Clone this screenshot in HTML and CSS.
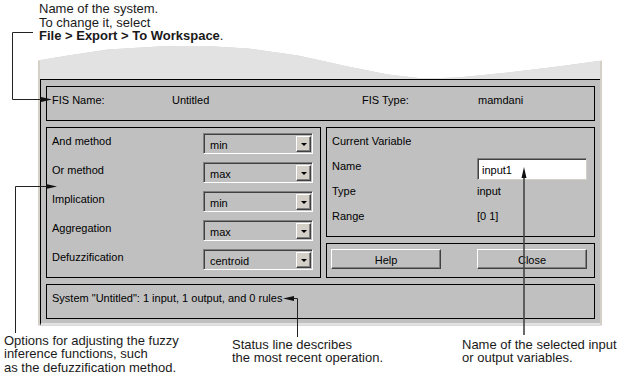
FILE: index.html
```html
<!DOCTYPE html>
<html lang="en">
  <head>
    <meta charset="UTF-8" />
    <meta name="viewport" content="width=device-width, initial-scale=1.0" />
    <title>FIS Editor</title>

    <link rel="stylesheet" href="styles.css">
  </head>
  <body>
    <div class="page">
      <p class="note note-top">
        Name of the system.<br />
        To change it, select<br />
        <b>File &gt; Export &gt; To Workspace</b>.
      </p>

      <div class="window">
        <div class="window-top"></div>
        <div class="window-body">
          <div class="panel fis-row">
            <span>FIS Name:</span>
            <span>Untitled</span>
            <span>FIS Type:</span>
            <span>mamdani</span>
          </div>

          <div class="middle">
            <div class="panel methods">
              <span class="label">And method</span>
              <div class="select"><span>min</span><i class="select-btn"></i></div>
              <span class="label">Or method</span>
              <div class="select"><span>max</span><i class="select-btn"></i></div>
              <span class="label">Implication</span>
              <div class="select"><span>min</span><i class="select-btn"></i></div>
              <span class="label">Aggregation</span>
              <div class="select"><span>max</span><i class="select-btn"></i></div>
              <span class="label">Defuzzification</span>
              <div class="select"><span>centroid</span><i class="select-btn"></i></div>
            </div>

            <div class="right-col">
              <div class="panel current-var">
                <span class="title">Current Variable</span>
                <span class="label">Name</span>
                <div class="edit">input1</div>
                <span class="label">Type</span>
                <span class="label">input</span>
                <span class="label">Range</span>
                <span class="label">[0 1]</span>
              </div>
              <div class="panel buttons">
                <button>Help</button>
                <button>Close</button>
              </div>
            </div>
          </div>

          <div class="panel status">System "Untitled": 1 input, 1 output, and 0 rules</div>
        </div>
      </div>

      <div class="notes-bottom">
        <p class="note note-options">
          Options for adjusting the fuzzy<br />
          inference functions, such<br />
          as the defuzzification method.
        </p>
        <p class="note note-status">
          Status line describes<br />
          the most recent operation.
        </p>
        <p class="note note-name">
          Name of the selected input<br />
          or output variables.
        </p>
      </div>

      <!-- callout lines -->
      <svg class="callouts" width="623" height="379" viewBox="0 0 623 379">
        <g fill="none" stroke="#222" stroke-width="1">
          <path d="M33 32.5 H12.5 V99.5 H43" />
          <path d="M15.5 333 V186.5 H48" />
          <path d="M292 298.5 H297.5 V337" />
        </g>
        <path d="M524 177 V335" fill="none" stroke="#444" stroke-width="1.6" />
        <g fill="#111">
          <polygon points="41,97 52,99.5 41,102" />
          <polygon points="46,184 57,186.5 46,189" />
          <polygon points="283,298.5 294,296 294,301" />
          <polygon points="524,167 521.5,178 526.5,178" />
        </g>
      </svg>
    </div>
  </body>
</html>
```

FILE: styles.css
```css
body {
  margin: 0;
  background: #fff;
  font-family: "Liberation Sans", Arial, sans-serif;
  color: #000;
}

.page {
  position: relative;
  width: 623px;
  height: 379px;
  overflow: hidden;
}

.note {
  margin: 0;
  font-size: 13px;
  line-height: 13.5px;
  color: #1a1a1a;
}

.note-top {
  padding: 2px 0 0 39px;
}

.window {
  margin: 3px 0 0 38px;
  width: 564px;
  padding: 0 2px;
  box-sizing: border-box;
  background: #d4d0c8;
  clip-path: polygon(0 15px, 30px 10px, 70px 4px, 120px 1px, 160px 0, 210px 3px, 260px 10px, 310px 21px, 350px 29px, 385px 33px, 420px 32px, 470px 27px, 520px 21px, 564px 15px, 564px 100%, 0 100%);
}

.window-top {
  height: 33px;
  background: #e2e2e2;
}

.window-body {
  background: #c0c0c0;
  border-top: 1px solid #000;
  border-left: 1px solid #000;
  border-bottom: 3px solid #e2e2e2;
  padding: 6px 5px 4px 5px;
  display: flex;
  flex-direction: column;
  gap: 6px;
  font-size: 11px;
  line-height: 13px;
}

.panel {
  border: 1px solid #000;
  box-sizing: border-box;
}

.fis-row {
  height: 35px;
  padding: 7px 5px 0 5px;
  display: grid;
  grid-template-columns: 120px 190px 116px auto;
}

.middle {
  display: grid;
  grid-template-columns: 275px 269px;
  gap: 5px;
  height: 151px;
}

.methods {
  padding: 5px 7px 0 5px;
  display: grid;
  grid-template-columns: 151px 110px;
  grid-auto-rows: 21px;
  row-gap: 8px;
}

.label {
  align-self: start;
  margin-top: 2px;
}

.select {
  display: flex;
  align-items: stretch;
  background: #c0c0c0;
  border-top: 1px solid #808080;
  border-left: 1px solid #808080;
  border-right: 1px solid #fff;
  border-bottom: 1px solid #fff;
  box-shadow: inset 1px 1px 0 #404040;
}

.select span {
  flex: 1;
  padding: 5px 0 0 6px;
}

.select-btn {
  width: 13px;
  margin: 2px 1px 1px 0;
  background: #d4d0c8;
  border-top: 1px solid #fff;
  border-left: 1px solid #fff;
  border-right: 1px solid #404040;
  border-bottom: 1px solid #404040;
  box-shadow: inset -1px -1px 0 #808080;
  display: flex;
  align-items: center;
  justify-content: center;
}

.select-btn::after {
  content: "";
  border-left: 3px solid transparent;
  border-right: 3px solid transparent;
  border-top: 3px solid #000;
  margin-top: 1px;
}

.right-col {
  display: flex;
  flex-direction: column;
  gap: 6px;
}

.current-var {
  height: 110px;
  padding: 7px 0 0 5px;
  display: grid;
  grid-template-columns: 145px 110px;
  grid-template-rows: 23px 25px 25px 25px;
}

.current-var .title {
  grid-column: 1 / 3;
}

.edit {
  height: 22px;
  box-sizing: border-box;
  background: #fff;
  padding: 5px 0 0 4px;
  border-top: 1px solid #808080;
  border-left: 1px solid #808080;
  border-right: 1px solid #d4d0c8;
  border-bottom: 1px solid #d4d0c8;
  box-shadow: inset 1px 1px 0 #404040;
}

.buttons {
  height: 35px;
  padding: 5px 0 0 4px;
  display: grid;
  grid-template-columns: 110px 110px;
  column-gap: 36px;
  align-items: start;
}

.buttons button {
  height: 20px;
  padding: 4px 0 0;
  font: inherit;
  color: #000;
  background: #c0c0c0;
  border-top: 1px solid #fff;
  border-left: 1px solid #fff;
  border-right: 1px solid #404040;
  border-bottom: 1px solid #404040;
  box-shadow: inset -1px -1px 0 #808080;
}

.status {
  height: 35px;
  padding: 7px 5px 0 5px;
}

.notes-bottom {
  display: flex;
  align-items: flex-start;
  margin-top: 8px;
}

.note-options {
  width: 228px;
  padding-left: 4px;
}

.note-status {
  width: 230px;
  margin-top: 4px;
}

.note-name {
  margin-top: 4px;
}

.callouts {
  position: absolute;
  left: 0;
  top: 0;
  pointer-events: none;
}
```
